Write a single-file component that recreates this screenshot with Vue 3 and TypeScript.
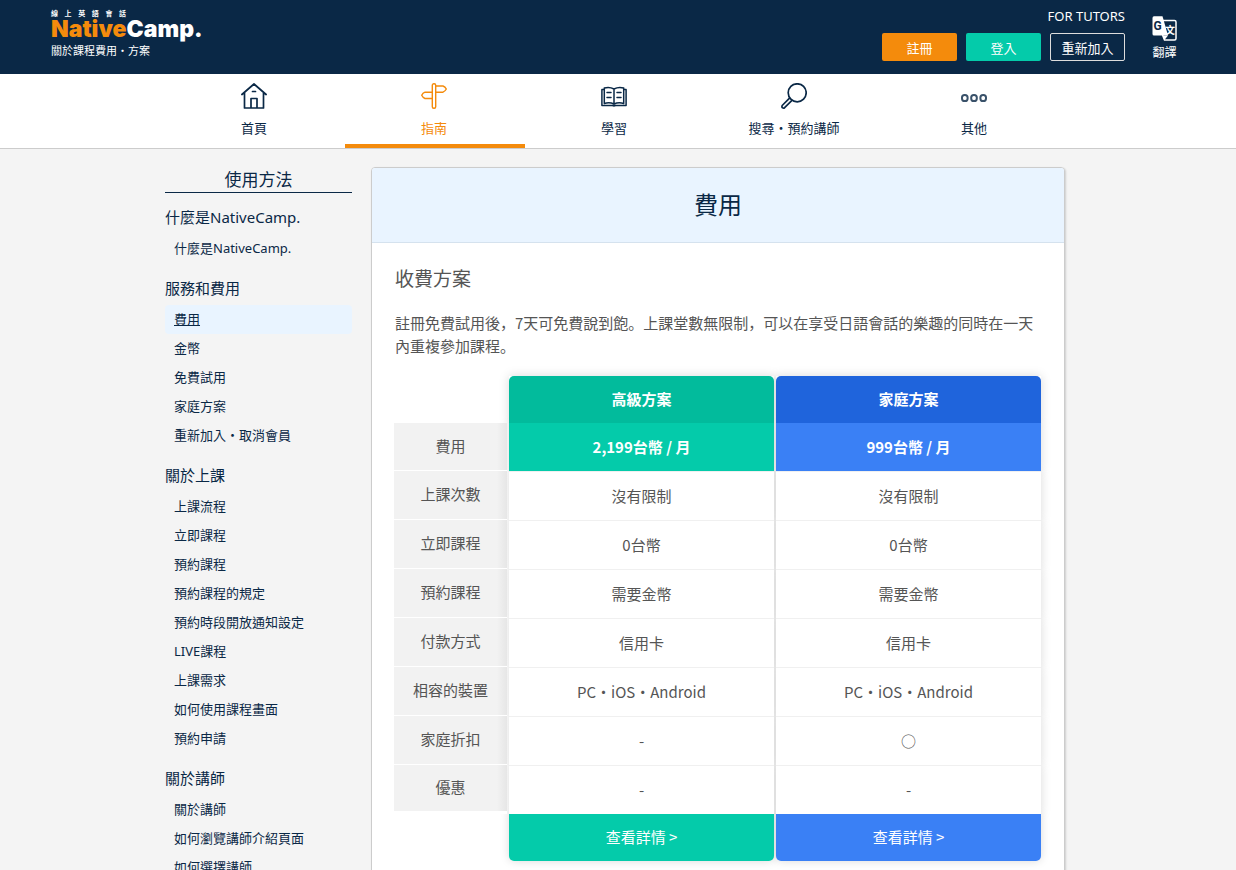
<script setup lang="ts">
import { ref } from 'vue'

interface NavItem {
  id: string
  label: string
}

interface MenuGroup {
  title: string
  items: string[]
}

interface PlanRow {
  label: string
  premium: string
  family: string
}

const taglineChars: string[] = ['線', '上', '英', '語', '會', '話']

const navItems: NavItem[] = [
  { id: 'home', label: '首頁' },
  { id: 'guide', label: '指南' },
  { id: 'study', label: '學習' },
  { id: 'search', label: '搜尋・預約講師' },
  { id: 'other', label: '其他' },
]

const activeNav = ref('guide')
const activeItem = ref('費用')

const groups: MenuGroup[] = [
  { title: '什麼是NativeCamp.', items: ['什麼是NativeCamp.'] },
  { title: '服務和費用', items: ['費用', '金幣', '免費試用', '家庭方案', '重新加入・取消會員'] },
  {
    title: '關於上課',
    items: [
      '上課流程',
      '立即課程',
      '預約課程',
      '預約課程的規定',
      '預約時段開放通知設定',
      'LIVE課程',
      '上課需求',
      '如何使用課程畫面',
      '預約申請',
    ],
  },
  { title: '關於講師', items: ['關於講師', '如何瀏覽講師介紹頁面', '如何選擇講師'] },
]

const rows: PlanRow[] = [
  { label: '上課次數', premium: '沒有限制', family: '沒有限制' },
  { label: '立即課程', premium: '0台幣', family: '0台幣' },
  { label: '預約課程', premium: '需要金幣', family: '需要金幣' },
  { label: '付款方式', premium: '信用卡', family: '信用卡' },
  { label: '相容的裝置', premium: 'PC・iOS・Android', family: 'PC・iOS・Android' },
  { label: '家庭折扣', premium: '-', family: '○' },
  { label: '優惠', premium: '-', family: '-' },
]
</script>

<template>
  <div class="page">
    <header class="site-header">
      <div class="brand">
        <a href="#" class="logo">
          <span class="tagline"><span v-for="c in taglineChars" :key="c">{{ c }}</span></span>
          <span class="wordmark"><span class="native">Native</span>Camp.</span>
        </a>
        <p class="subtitle">關於課程費用・方案</p>
      </div>
      <div class="account">
        <div class="account-main">
          <a href="#" class="tutors">FOR TUTORS</a>
          <div class="buttons">
            <button type="button" class="btn orange">註冊</button>
            <button type="button" class="btn green">登入</button>
            <button type="button" class="btn outline">重新加入</button>
          </div>
        </div>
        <button type="button" class="translate">
          <svg viewBox="0 0 25 26" width="25" height="26" aria-hidden="true">
            <path d="M11 4.500H22.500Q24 4.500 24 6V22.500Q24 24 22.500 24H12.500L10.500 19" fill="none" stroke="#fff" stroke-width="1.500" />
            <path d="M2 0.300H10.500L16 19.500H2Q0.500 19.500 0.500 18V2Q0.500 0.300 2 0.300Z" fill="#fff" />
            <path d="M10.500 19.500H16L12.500 24Z" fill="#fff" />
            <text x="1.500" y="14" class="g-glyph">G</text>
            <text x="13" y="18" class="wen-glyph">文</text>
          </svg>
          <span>翻譯</span>
        </button>
      </div>
    </header>

    <nav class="main-nav" aria-label="主選單">
      <ul class="container nav-list">
        <li v-for="item in navItems" :key="item.id">
          <a href="#" :class="{ active: item.id === activeNav }" @click.prevent="activeNav = item.id">
            <svg viewBox="0 0 26 26" width="26" height="26" fill="none" stroke="currentColor" stroke-width="1.700" stroke-linejoin="round" stroke-linecap="round" aria-hidden="true">
              <g v-if="item.id === 'home'">
                <path d="M0.900 11.500L13 1L25.100 11.500M3.500 9.700V25H22.500V9.700M10 25V15.500H16V25M11.500 8.500H14.500" />
              </g>
              <g v-else-if="item.id === 'guide'" stroke-width="1.400">
                <rect x="11.300" y="0.700" width="3.400" height="24.600" rx="1.500" />
                <path d="M14.700 3H22Q24.200 3.800 25.300 6Q24.200 8.200 22 9.200H14.700M11.300 9.200H4Q1.800 10 0.700 12.300Q1.800 14.600 4 15.500H11.300" />
              </g>
              <g v-else-if="item.id === 'study'" stroke-width="1.500">
                <path d="M13 6Q8.500 3.500 3.300 5V20.500Q8.500 19 13 21Q17.500 19 22.700 20.500V5Q17.500 3.500 13 6ZM13 6V21.500M3.300 6.500H0.900V22.500H11.500Q13 23.300 14.500 22.500H25.100V6.500H22.700" />
                <path d="M6 9.500H10M6 14.500H10M16 9.500H20M16 14.500H20" />
              </g>
              <g v-else-if="item.id === 'search'">
                <circle cx="16.200" cy="9.800" r="9" />
                <path d="M8.300 15.300L1.200 22.500Q0.500 24 1.500 24.700Q2.500 25.500 3.600 24.700L10.700 17.600" />
              </g>
              <g v-else stroke-width="2" opacity="0.800">
                <rect x="1" y="12" width="5.600" height="6" rx="2.600" />
                <rect x="10.200" y="12" width="5.600" height="6" rx="2.600" />
                <rect x="19.400" y="12" width="5.600" height="6" rx="2.600" />
              </g>
            </svg>
            <span>{{ item.label }}</span>
          </a>
        </li>
      </ul>
    </nav>

    <div class="container body">
      <aside class="sidebar">
        <h2 class="side-title">使用方法</h2>
        <div class="groups">
          <section v-for="group in groups" :key="group.title">
            <h3>{{ group.title }}</h3>
            <ul>
              <li v-for="entry in group.items" :key="entry">
                <a href="#" :class="{ current: entry === activeItem }" @click.prevent="activeItem = entry">{{ entry }}</a>
              </li>
            </ul>
          </section>
        </div>
      </aside>

      <main class="card">
        <h1>費用</h1>
        <div class="card-body">
          <h2>收費方案</h2>
          <p>註冊免費試用後，7天可免費說到飽。上課堂數無限制，可以在享受日語會話的樂趣的同時在一天內重複參加課程。</p>
          <div class="plans">
            <table>
              <colgroup>
                <col class="label-col" />
                <col />
                <col />
              </colgroup>
              <thead>
                <tr>
                  <td></td>
                  <th scope="col" class="plan name premium">高級方案</th>
                  <th scope="col" class="plan name family">家庭方案</th>
                </tr>
              </thead>
              <tbody>
                <tr class="price">
                  <th scope="row">費用</th>
                  <td class="plan premium">2,199台幣 / 月</td>
                  <td class="plan family">999台幣 / 月</td>
                </tr>
                <tr v-for="row in rows" :key="row.label" class="detail">
                  <th scope="row">{{ row.label }}</th>
                  <td class="plan">{{ row.premium }}</td>
                  <td class="plan">{{ row.family }}</td>
                </tr>
              </tbody>
              <tfoot>
                <tr>
                  <td></td>
                  <td class="plan premium"><a href="#">查看詳情 &gt;</a></td>
                  <td class="plan family"><a href="#">查看詳情 &gt;</a></td>
                </tr>
              </tfoot>
            </table>
          </div>
        </div>
      </main>
    </div>
  </div>
</template>

<style>
html {
  background: #f4f4f4;
}

body {
  margin: 0;
  overflow: hidden;
  height: 100vh;
}
</style>

<style scoped>
.page {
  color: #0a2846;
  font-family: "Noto Sans", "Noto Sans CJK TC", sans-serif;
  font-size: 13px;
}

.page *,
.page *::before {
  box-sizing: border-box;
}

a {
  color: inherit;
  text-decoration: none;
}

h1,
h2,
h3,
p,
ul {
  margin: 0;
  padding: 0;
  font-weight: 400;
}

ul {
  list-style: none;
}

button {
  font: inherit;
  cursor: pointer;
}

.site-header {
  display: flex;
  justify-content: space-between;
  height: 74px;
  padding: 0 59px 0 51px;
  background: #0a2846;
  color: #fff;
}

.brand {
  padding-top: 10px;
}

.logo {
  display: block;
}

.tagline {
  display: flex;
  justify-content: space-between;
  width: 75px;
  font-size: 7px;
  font-weight: 700;
  line-height: 8px;
}

.wordmark {
  display: block;
  font-family: Inter, sans-serif;
  font-size: 23px;
  font-weight: 900;
  line-height: 22px;
}

.native {
  color: #f48b0c;
}

.subtitle {
  font-size: 11px;
  line-height: 22px;
}

.account {
  display: flex;
  gap: 27px;
}

.account-main {
  display: flex;
  flex-direction: column;
  align-items: flex-end;
  padding-top: 7px;
}

.tutors {
  line-height: 18px;
}

.buttons {
  display: flex;
  gap: 9px;
  padding-top: 8px;
}

.btn {
  width: 75px;
  height: 28px;
  padding: 0;
  border: 0;
  border-radius: 2px;
  color: #fff;
}

.orange {
  background: #f48b0c;
}

.green {
  background: #04cbaa;
}

.outline {
  border: 1px solid #ddd;
  background: transparent;
}

.translate {
  display: flex;
  flex-direction: column;
  align-items: center;
  padding: 16px 0 0;
  border: 0;
  background: none;
  color: #fff;
  font-size: 12px;
  line-height: 22px;
}

.g-glyph {
  fill: #0a2846;
  font-family: Roboto, sans-serif;
  font-size: 12px;
  font-weight: 700;
}

.wen-glyph {
  fill: #fff;
  font-size: 10px;
  font-weight: 700;
}

.main-nav {
  padding-right: 6px;
  border-bottom: 1px solid #ccc;
  background: #fff;
}

.container {
  max-width: 900px;
  margin: 0 auto;
}

.nav-list {
  display: flex;
}

.nav-list li {
  flex: 1;
}

.nav-list a {
  display: flex;
  flex-direction: column;
  align-items: center;
  gap: 9px;
  height: 74px;
  padding: 9px 2px 0 0;
  border-bottom: 4px solid transparent;
  line-height: 20px;
}

.nav-list a.active {
  border-color: #f48b0c;
  color: #f48b0c;
}

.body {
  display: flex;
  align-items: flex-start;
  justify-content: space-between;
  gap: 19px;
  max-width: 906px;
  padding: 18px 6px 0 0;
  box-sizing: border-box;
}

.sidebar {
  flex: 0 0 187px;
}

.side-title {
  padding-top: 1px;
  border-bottom: 1px solid #0a2846;
  font-size: 17px;
  line-height: 24px;
  text-align: center;
}

.groups {
  display: flex;
  flex-direction: column;
  gap: 14px;
  padding-top: 13px;
}

.groups h3 {
  margin-bottom: 6px;
  font-size: 15px;
  line-height: 22px;
}

.groups li a {
  display: block;
  padding-left: 9px;
  border-radius: 4px;
  line-height: 29px;
}

.groups a.current {
  background: #e9f4ff;
  text-decoration: underline;
}

.card {
  flex: 1;
  min-width: 0;
  border: 1px solid #ccc;
  border-radius: 4px;
  background: #fff;
  box-shadow: 1px 1px 2px rgba(0, 0, 0, 0.15);
  font-family: "Noto Sans CJK JP", sans-serif;
}

.card h1 {
  padding-bottom: 2px;
  border-bottom: 1px solid #d5e2ee;
  border-radius: 3px 3px 0 0;
  background: #e9f4ff;
  font-size: 24px;
  line-height: 72px;
  text-align: center;
}

.card-body {
  padding: 19px 23px 40px;
  color: #555;
  font-size: 15px;
}

.card-body h2 {
  font-size: 19px;
  line-height: 32px;
}

.card-body p {
  padding: 17px 0 19px;
  line-height: 23px;
}

.plans {
  margin: 0 -2px 0 -3px;
}

table {
  isolation: isolate;
  width: 100%;
  border-spacing: 2px 0;
  table-layout: fixed;
  line-height: 24px;
  text-align: center;
}

.label-col {
  width: 113px;
}

td,
th {
  height: 49px;
  padding: 0;
  font-weight: 400;
}

thead th,
thead td,
tfoot td {
  height: 47px;
}

tbody th {
  padding-bottom: 3px;
  border-bottom: 1px solid #fff;
  background: linear-gradient(to left, #e6e6e6, #f2f2f2 10px);
}

tbody tr:last-child th {
  border-bottom-width: 3px;
}

.price th,
.price td {
  height: 48px;
}

.price th {
  padding-bottom: 1px;
}

.plan {
  position: relative;
}

.plan::before {
  content: "";
  position: absolute;
  inset: 0;
  z-index: -1;
  box-shadow: 0 0 10px rgba(0, 0, 0, 0.15);
}

.detail .plan {
  border-top: 1px solid #f0f0f0;
  background: #fff;
}

.premium {
  background: #04cbaa;
}

.family {
  background: #3a80f5;
}

.name {
  padding-bottom: 2px;
  border-radius: 5px 5px 0 0;
  color: #fff;
  font-weight: 700;
}

.name.premium {
  background: #02bb9c;
}

.name.family {
  background: #1f64dc;
}

.price .plan {
  color: #fff;
  font-weight: 700;
}

tfoot .plan,
tfoot .plan::before {
  border-radius: 0 0 5px 5px;
}

tfoot a {
  display: block;
  padding-bottom: 2px;
  color: #fff;
  line-height: 45px;
}
</style>
